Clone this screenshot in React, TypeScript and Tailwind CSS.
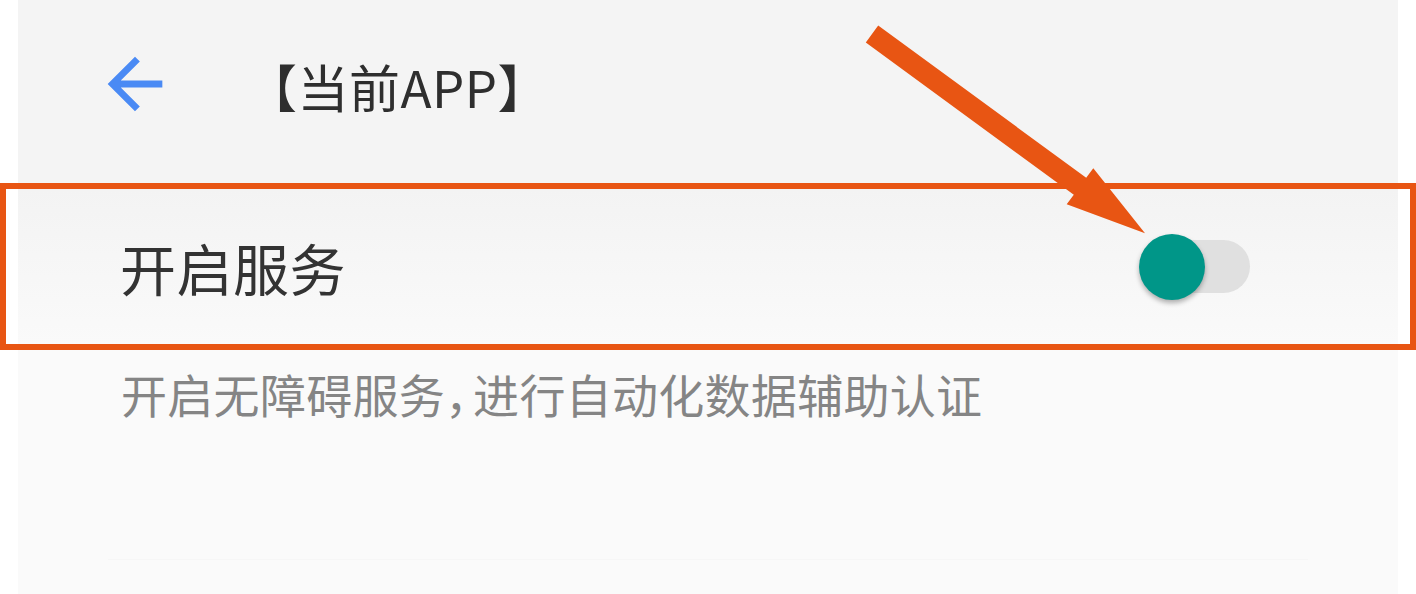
import React from 'react';

function BackArrow() {
  return (
    <svg viewBox="0 0 24 24" className="w-[82px] h-[82px] shrink-0" fill="#4a8af4">
      <path d="M20 11H7.83l5.59-5.59L12 4l-8 8 8 8 1.41-1.41L7.83 13H20v-2z" />
    </svg>
  );
}

function Toggle() {
  return (
    <div className="relative w-[106px] h-[53px] rounded-full bg-[#e0e0e0]">
      <div className="absolute left-[-5px] top-1/2 -translate-y-1/2 w-[66px] h-[66px] rounded-full bg-[#009688] shadow-[0_3px_5px_rgba(0,0,0,0.3)]" />
    </div>
  );
}

export default function App() {
  return (
    <div className="relative w-full h-[594px] overflow-hidden bg-white font-['Noto_Sans_CJK_SC','Noto_Sans',sans-serif]">
      {/* toolbar */}
      <div className="mx-[18px] h-[183px] bg-[#f4f4f4] flex items-center pb-[15px] pl-[76px]">
        <BackArrow />
        <h1 className="ml-[70px] mt-[4px] text-[51px] leading-none text-[#2e2e2e] tracking-[0.5px]">【当前APP】</h1>
      </div>

      {/* highlighted row */}
      <div className="h-[167px] border-[6px] border-[#e85513] bg-white flex">
        <div className="mx-[12px] flex-1 flex items-center justify-between bg-linear-to-b from-[#f3f3f3] to-[#fafafa] pl-[102px] pr-[148px]">
          <span className="text-[56px] leading-none text-[#333333] tracking-[0.5px]">开启服务</span>
          <Toggle />
        </div>
      </div>

      {/* description */}
      <div className="mx-[18px] h-[244px] bg-[#fafafa] pt-[20px] pl-[103px]">
        <p className="text-[46px] leading-none text-[#858585] whitespace-nowrap tracking-[0.3px]">
          开启无障碍服务<span className="tracking-[-18px]">，</span>进行自动化数据辅助认证
        </p>
        <div className="mt-[143px] ml-[-13px] w-[1200px] h-px bg-[#f6f6f6]" />
      </div>

      {/* annotation arrow */}
      <svg className="absolute inset-0 pointer-events-none" width="1416" height="594" viewBox="0 0 1416 594">
        <polygon
          fill="#e85513"
          points="865.8,42.5 878.2,25.5 1086.2,177.8 1093.3,168.3 1145,233.3 1066.7,204.3 1073.8,194.8"
        />
      </svg>
    </div>
  );
}
